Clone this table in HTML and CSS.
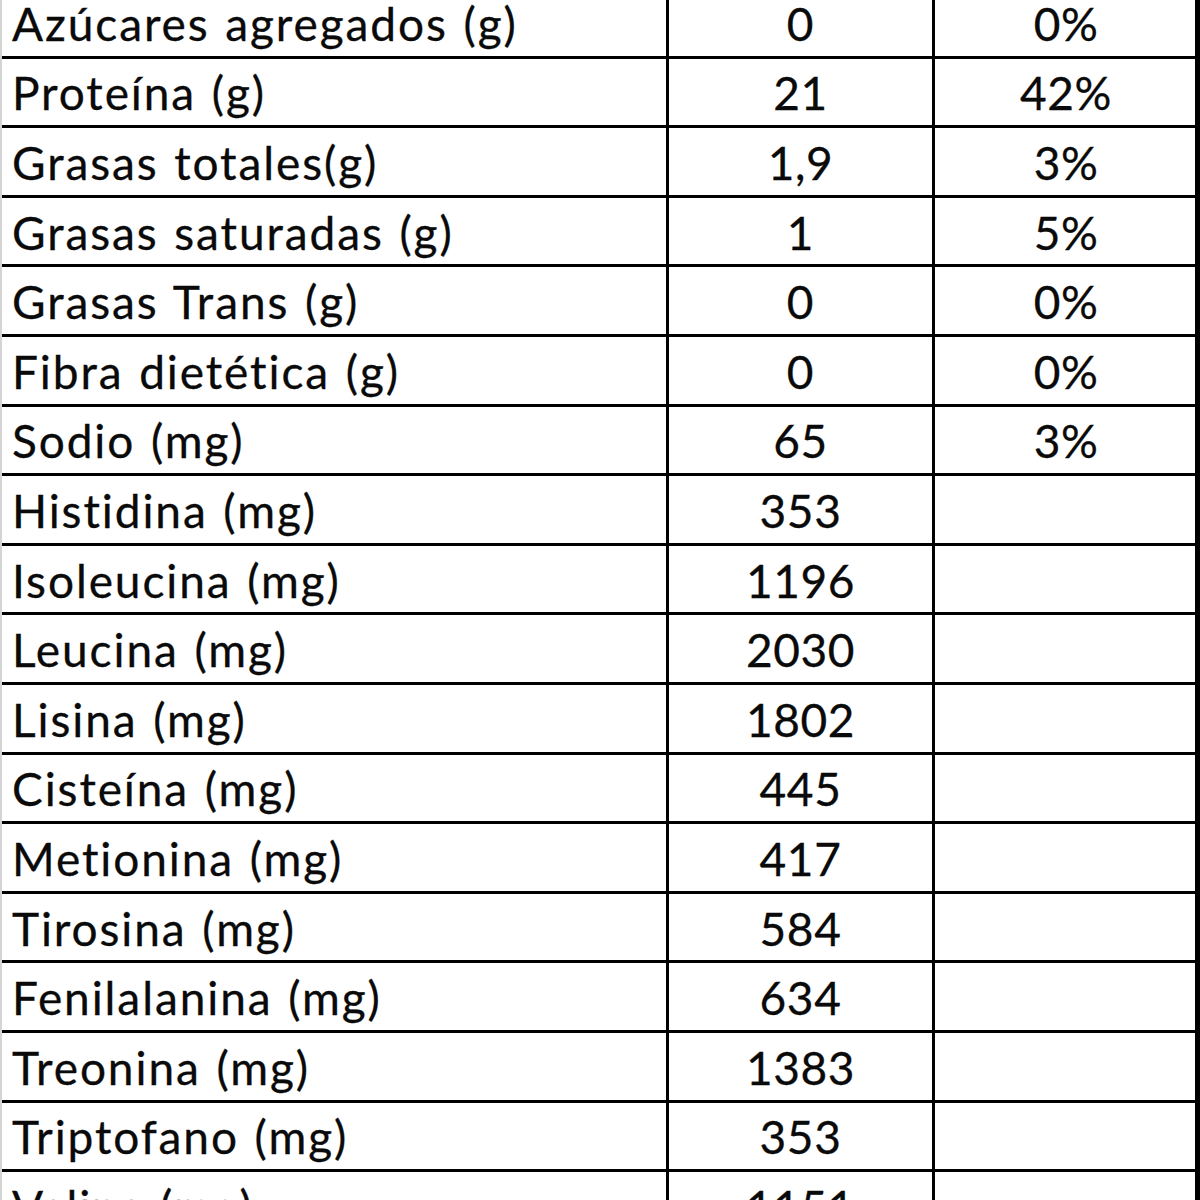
FILE: index.html
```html
<!DOCTYPE html>
<html lang="es">
<head>
<meta charset="utf-8">
<link rel="stylesheet" href="styles.css">
</head>
<body>
<div class="sheet">
  <div class="c name">Azúcares agregados (g)</div><div class="c num">0</div><div class="c pct">0%</div>
  <div class="c name">Proteína (g)</div><div class="c num">21</div><div class="c pct">42%</div>
  <div class="c name">Grasas totales(g)</div><div class="c num">1,9</div><div class="c pct">3%</div>
  <div class="c name">Grasas saturadas (g)</div><div class="c num">1</div><div class="c pct">5%</div>
  <div class="c name">Grasas Trans (g)</div><div class="c num">0</div><div class="c pct">0%</div>
  <div class="c name">Fibra dietética (g)</div><div class="c num">0</div><div class="c pct">0%</div>
  <div class="c name">Sodio (mg)</div><div class="c num">65</div><div class="c pct">3%</div>
  <div class="c name">Histidina (mg)</div><div class="c num">353</div><div class="c pct"></div>
  <div class="c name">Isoleucina (mg)</div><div class="c num">1196</div><div class="c pct"></div>
  <div class="c name">Leucina (mg)</div><div class="c num">2030</div><div class="c pct"></div>
  <div class="c name">Lisina (mg)</div><div class="c num">1802</div><div class="c pct"></div>
  <div class="c name">Cisteína (mg)</div><div class="c num">445</div><div class="c pct"></div>
  <div class="c name">Metionina (mg)</div><div class="c num">417</div><div class="c pct"></div>
  <div class="c name">Tirosina (mg)</div><div class="c num">584</div><div class="c pct"></div>
  <div class="c name">Fenilalanina (mg)</div><div class="c num">634</div><div class="c pct"></div>
  <div class="c name">Treonina (mg)</div><div class="c num">1383</div><div class="c pct"></div>
  <div class="c name">Triptofano (mg)</div><div class="c num">353</div><div class="c pct"></div>
  <div class="c name">Valina (mg)</div><div class="c num">1151</div><div class="c pct"></div>
</div>
</body>
</html>
```
FILE: styles.css
```css
html, body {
  margin: 0;
  padding: 0;
  background: #fff;
  overflow: hidden;
}
.sheet {
  display: grid;
  grid-template-columns: 664px 266px 263px;
  grid-template-rows: 58.6px;
  grid-auto-rows: 69.6px;
  width: 1200px;
  box-sizing: border-box;
  border-left: 2px solid #d4d4d4;
  border-right: 5px solid #000;
  font-family: Lato, "Noto Sans", sans-serif;
  font-size: 46px;
  line-height: 1;
  font-variant-ligatures: none;
  color: #0a0a0a;
  -webkit-text-stroke: 0.3px #0a0a0a;
}
.c {
  box-sizing: border-box;
  border-bottom: 3px solid #000;
  display: flex;
  align-items: flex-end;
  padding-bottom: 8.8px;
  white-space: nowrap;
}
.name {
  padding-left: 10px;
  letter-spacing: 1.9px;
  word-spacing: 2px;
}
.num, .pct {
  border-left: 3px solid #000;
  justify-content: center;
  letter-spacing: 0.6px;
}
.pct {
  padding-left: 2px;
}
```
